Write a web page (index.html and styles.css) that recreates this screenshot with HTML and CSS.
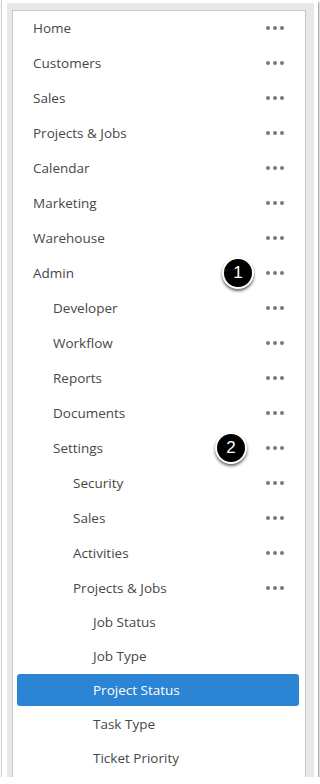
FILE: index.html
```html
<!DOCTYPE html>
<html lang="en">
<head>
    <meta charset="UTF-8">
    <meta name="viewport" content="width=device-width, initial-scale=1.0">
    <title>Menu</title>
    <link rel="stylesheet" href="styles.css">
</head>
<body>
    <div class="shot">
        <div class="frame">
            <ul class="menu">
                <li class="item lvl-0"><span>Home</span><i class="dots"></i></li>
                <li class="item lvl-0"><span>Customers</span><i class="dots"></i></li>
                <li class="item lvl-0"><span>Sales</span><i class="dots"></i></li>
                <li class="item lvl-0"><span>Projects &amp; Jobs</span><i class="dots"></i></li>
                <li class="item lvl-0"><span>Calendar</span><i class="dots"></i></li>
                <li class="item lvl-0"><span>Marketing</span><i class="dots"></i></li>
                <li class="item lvl-0"><span>Warehouse</span><i class="dots"></i></li>
                <li class="item lvl-0"><span>Admin</span><b class="badge badge-1">1</b><i class="dots"></i></li>
                <li class="item lvl-1"><span>Developer</span><i class="dots"></i></li>
                <li class="item lvl-1"><span>Workflow</span><i class="dots"></i></li>
                <li class="item lvl-1"><span>Reports</span><i class="dots"></i></li>
                <li class="item lvl-1"><span>Documents</span><i class="dots"></i></li>
                <li class="item lvl-1"><span>Settings</span><b class="badge badge-2">2</b><i class="dots"></i></li>
                <li class="item lvl-2"><span>Security</span><i class="dots"></i></li>
                <li class="item lvl-2"><span>Sales</span><i class="dots"></i></li>
                <li class="item lvl-2"><span>Activities</span><i class="dots"></i></li>
                <li class="item lvl-2"><span>Projects &amp; Jobs</span><i class="dots"></i></li>
                <li class="leaf"><span>Job Status</span></li>
                <li class="leaf"><span>Job Type</span></li>
                <li class="leaf active"><span>Project Status</span></li>
                <li class="leaf"><span>Task Type</span></li>
                <li class="leaf"><span>Ticket Priority</span></li>
            </ul>
        </div>
    </div>
</body>
</html>
```

FILE: styles.css
```css
body {
    margin: 0;
    background: #fff;
    font-family: "Open Sans", "Noto Sans", Arial, sans-serif;
    color: #474747;
    overflow: hidden;
}

.shot {
    width: 317px;
    height: 777px;
    margin-left: 1px;
    padding: 3px 4px 0 5px;
    box-sizing: border-box;
    border-left: 1px solid #d2d2d2;
    background: #fff;
    box-shadow: 1px 2px 2px rgba(0, 0, 0, 0.45);
}

.frame {
    height: 774px;
    padding: 7px 8px 0 5px;
    box-sizing: border-box;
    background: #e8e8e8;
}

.menu {
    list-style: none;
    margin: 0;
    padding: 0;
    height: 767px;
    box-sizing: border-box;
    background: #fff;
    border: 1px solid #c6c6c6;
    border-bottom: none;
    overflow: hidden;
}

.menu li:first-child {
    margin-top: -1px;
}

.item {
    position: relative;
    display: flex;
    align-items: center;
    height: 35px;
    padding-right: 21px;
    font-size: 13.5px;
}

.item span {
    flex: 1;
}

.lvl-0 { padding-left: 20px; }
.lvl-1 { padding-left: 40px; }
.lvl-2 { padding-left: 60px; }

.leaf {
    display: flex;
    align-items: center;
    height: 34px;
    margin: 0 6px 0 4px;
    padding-left: 76px;
    border-radius: 3px;
    font-size: 13.5px;
}

.leaf.active {
    height: 32px;
    margin-top: 1px;
    margin-bottom: 1px;
    background: #2b84d4;
    color: #fff;
}

/* три точки справа */
.dots {
    width: 4px;
    height: 4px;
    border-radius: 50%;
    background: #7a7a7a;
    margin-right: 14px;
    box-shadow: 7px 0 0 #7a7a7a, 14px 0 0 #7a7a7a;
}

.badge {
    position: absolute;
    top: 50%;
    width: 28px;
    height: 28px;
    margin-top: -16px;
    border: 2px solid #fff;
    border-radius: 50%;
    background: #000;
    color: #fff;
    font-family: Arial, "Liberation Sans", sans-serif;
    font-weight: normal;
    font-size: 17px;
    line-height: 28px;
    text-align: center;
    box-shadow: 0 2px 3px rgba(0, 0, 0, 0.6);
}

.badge-1 { left: 209px; }
.badge-2 { left: 202px; }
```
